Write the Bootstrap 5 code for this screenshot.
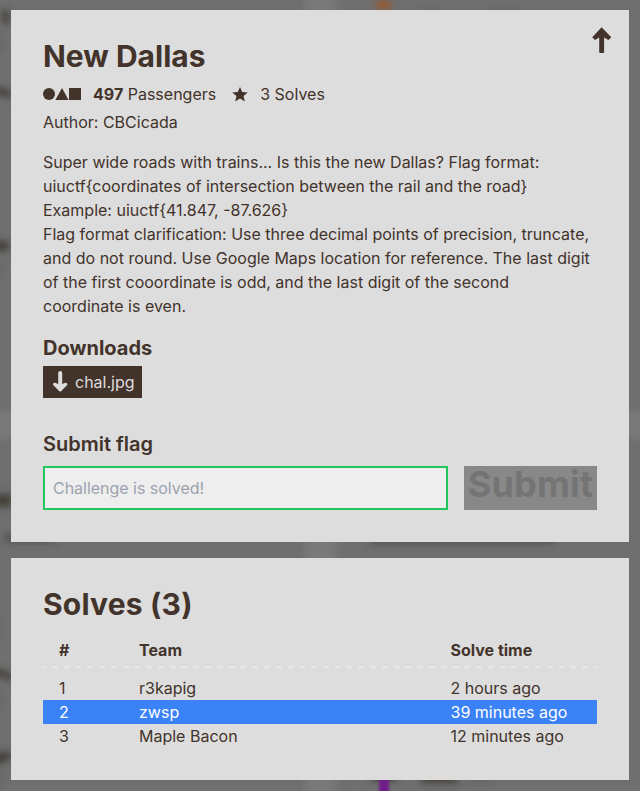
<!DOCTYPE html>
<html lang="en">
<head>
<meta charset="utf-8">
<meta name="viewport" content="width=device-width, initial-scale=1">
<title>New Dallas</title>
<link href="https://cdn.jsdelivr.net/npm/bootstrap@5.3.0/dist/css/bootstrap.min.css" rel="stylesheet">
<style>
body { background: #6f6f6f; color: #42332b; font-family: Inter, "Liberation Sans", sans-serif; font-size: 16px; line-height: 24px; height: 791px; overflow: hidden; }
.backdrop { position: fixed; left: 0; top: 0; z-index: -1; }
.dialog-stack { padding: 10px 11px 11px; gap: 16px; }
.panel { background: #ddd; padding: 31px 32px 32px; }
.panel-main { height: 532px; }
.panel-solves { height: 222px; }
.panel-title { font-size: 30px; line-height: 30px; font-weight: 700; margin: 0; }
.panel-solves .panel-title { letter-spacing: .2px; }
.close-arrow { position: absolute; top: 16px; right: 16px; border: 0; background: none; padding: 0; line-height: 0; }
.meta { margin-top: 11px; }
.meta-points { margin-left: 12px; }
.author { margin-top: 4px; }
.description { margin: 16px 0 0; }
.section-title { font-size: 20px; line-height: 28px; margin: 0; }
.flag-title { margin-top: 30px; }
.download-link { background: #42332b; color: #ddd; width: 99px; height: 32px; padding: 0 8px; gap: 5px; margin-top: 4px; }
.flag-input { width: 405px; height: 44px; background: #eee; border: 2px solid #22c55e; padding: 0 8px; font-size: 16px; line-height: 24px; letter-spacing: -.02px; }
.flag-input:disabled { background: #eee; }
.flag-input::placeholder { color: #9ca3af; }
.submit-btn { width: 133px; height: 44px; background: #888; color: #747474; font-size: 36px; line-height: 36px; letter-spacing: .2px; font-weight: 700; padding: 0; border: 0; }
.solve-row { display: grid; grid-template-columns: 80px 311.5px 1fr; padding: 0 0 0 16px; height: 24px; }
.solve-head { font-weight: 700; margin-top: 19px; }
.dash-rule { height: 2px; margin: 4px 0 8px; background: repeating-linear-gradient(90deg, #e5e7eb 0 3px, transparent 3px 8.8px, #e5e7eb 8.8px 11.787px); }
.own-team { background: #3b82f6; color: #fff; }
</style>
<script src="https://cdn.jsdelivr.net/npm/bootstrap@5.3.0/dist/js/bootstrap.bundle.min.js"></script>
</head>
<body>
<svg class="backdrop" width="640" height="791" aria-hidden="true">
  <defs>
    <filter id="soft" filterUnits="userSpaceOnUse" x="-40" y="-40" width="720" height="880"><feGaussianBlur stdDeviation="3.5"/></filter>
    <filter id="purple" filterUnits="userSpaceOnUse" x="360" y="760" width="50" height="50"><feGaussianBlur stdDeviation="1.2"/></filter>
  </defs>
  <g filter="url(#soft)">
    <path fill="#797979" d="M305 -40h31v880h-31zM-40 411h720v27h-720z"/>
    <g fill="#453f3b">
      <path d="M2 10h7v14h-7zM-20 87h22l10 5v7l-12-4h-20zM-20 241h29v10h-29zM-20 494h32v13h-32z"/>
      <path d="M-20 669h22l12 6v7l-12-5h-22zM-20 752h32v6l-10 6h-22z"/>
      <path opacity=".7" d="M5 534h50v8h-50zM370 536h185v7h-185z"/>
      <path d="M371 774h26v7h-26zM421 774h37v9h-37z"/>
      <path opacity=".3" d="M468 774h24v7h-24zM422 10h16v6h-16zM490 10h30v6h-30zM-6 36h7v12h-7zM-6 262h7v14h-7zM-6 620h5v12h-5zM-6 694h7v14h-7zM-6 770h7v14h-7z"/>
    </g>
  </g>
  <path filter="url(#soft)" fill="#96562a" d="M378 0h11l3 9h-17z"/>
  <path filter="url(#purple)" fill="#6f1d8a" d="M379 776h10v24h-10z"/>
</svg>

<main class="dialog-stack d-flex flex-column">
  <section class="panel panel-main position-relative">
    <button class="close-arrow" type="button" aria-label="Back to top">
      <svg width="22" height="30" viewBox="0 0 22 30" fill="#42332b"><path d="M10.6 1.2 20.3 11.2 17.4 14.1 13.1 11.6V26Q13.1 27 12.1 27H9.2Q8.2 27 8.2 26V11.6L4 14.1 1.2 11.2z"/></svg>
    </button>
    <h1 class="panel-title">New Dallas</h1>
    <div class="meta d-flex align-items-center">
      <svg width="38" height="12" viewBox="0 0 38 12" fill="#42332b" aria-hidden="true"><circle cx="6" cy="6" r="6"/><path d="M19 0 25.6 12H12.4zM26 0h12v12H26z"/></svg>
      <span class="meta-points"><b>497</b> Passengers</span>
      <svg class="ms-3" width="16" height="15" viewBox="0 0 16 15" fill="#42332b" aria-hidden="true"><path d="M8 0 10.2 5 15.8 5.5 11.5 9 12.9 14.6 8 11.6 3.1 14.6 4.5 9 .2 5.5 5.8 5z"/></svg>
      <span class="meta-points">3 Solves</span>
    </div>
    <div class="author">Author: CBCicada</div>
    <p class="description">Super wide roads with trains... Is this the new Dallas? Flag format:<br>uiuctf{coordinates of intersection between the rail and the road}<br>Example: uiuctf{41.847, -87.626}<br>Flag format clarification: Use three decimal points of precision, truncate,<br>and do not round. Use Google Maps location for reference. The last digit<br>of the first cooordinate is odd, and the last digit of the second<br>coordinate is even.</p>
    <h2 class="section-title fw-bold mt-3">Downloads</h2>
    <a class="download-link d-inline-flex align-items-center text-decoration-none" href="#">
      <svg class="flex-shrink-0" width="19" height="24" viewBox="0 0 19 24" fill="none" stroke="#ddd" stroke-width="4" stroke-linecap="round" stroke-linejoin="round" aria-hidden="true"><path d="M9.2 3V19"/><path fill="#ddd" stroke-width="3" d="M3.5 14.2 9.2 20 14.9 14.2 9.2 16.4z"/></svg>
      <span>chal.jpg</span>
    </a>
    <h2 class="section-title flag-title fw-semibold">Submit flag</h2>
    <div class="d-flex gap-3 mt-2">
      <input class="form-control rounded-0 flag-input" placeholder="Challenge is solved!" disabled>
      <button class="submit-btn d-flex justify-content-center flex-shrink-0" type="button" disabled>Submit</button>
    </div>
  </section>

  <section class="panel panel-solves">
    <h1 class="panel-title">Solves (3)</h1>
    <div class="solve-row solve-head"><span>#</span><span>Team</span><span>Solve time</span></div>
    <div class="dash-rule"></div>
    <div class="solve-row"><span>1</span><span>r3kapig</span><span>2 hours ago</span></div>
    <div class="solve-row own-team"><span>2</span><span>zwsp</span><span>39 minutes ago</span></div>
    <div class="solve-row"><span>3</span><span>Maple Bacon</span><span>12 minutes ago</span></div>
  </section>
</main>
</body>
</html>
